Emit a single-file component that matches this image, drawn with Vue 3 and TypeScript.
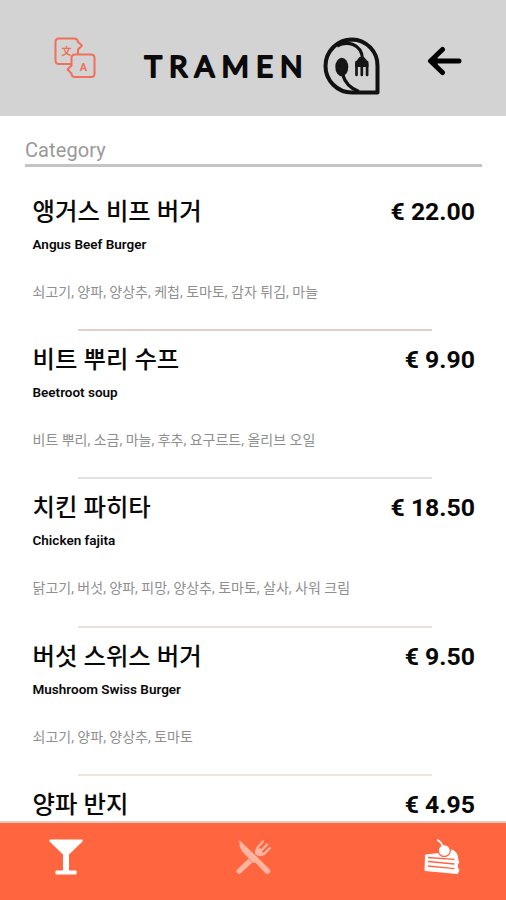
<script setup lang="ts">
interface Dish {
  name: string
  subtitle?: string
  ingredients?: string
  price: string
  tone?: string
}

const dishes: Dish[] = [
  { name: '앵거스 비프 버거', subtitle: 'Angus Beef Burger', ingredients: '쇠고기, 양파, 양상추, 케첩, 토마토, 감자 튀김, 마늘', price: '€ 22.00', tone: 'rose' },
  { name: '비트 뿌리 수프', subtitle: 'Beetroot soup', ingredients: '비트 뿌리, 소금, 마늘, 후추, 요구르트, 올리브 오일', price: '€ 9.90', tone: 'grey' },
  { name: '치킨 파히타', subtitle: 'Chicken fajita', ingredients: '닭고기, 버섯, 양파, 피망, 양상추, 토마토, 살사, 사워 크림', price: '€ 18.50', tone: 'sand' },
  { name: '버섯 스위스 버거', subtitle: 'Mushroom Swiss Burger', ingredients: '쇠고기, 양파, 양상추, 토마토', price: '€ 9.50', tone: 'blush' },
  { name: '양파 반지', price: '€ 4.95' },
]
</script>

<template>
  <div class="app">
    <header class="header">
      <svg class="translate" viewBox="0 0 42 42" fill="none" stroke="#f2705a" stroke-width="2" stroke-linejoin="round">
        <path d="M17 27H5Q1.500 27 1.500 23.500V5Q1.500 1.500 5 1.500H20Q23.500 1.500 24 5L28 8.500L24 12.500V17.500" />
        <path d="M21 17.500H37Q40.500 17.500 40.500 21V36.500Q40.500 40 37 40H21Q17.500 40 17.500 36.500L13.500 32.500L17.500 28.500V21Q17.500 17.500 21 17.500Z" />
        <text class="glyph-cjk" x="12.500" y="17.500" text-anchor="middle">文</text>
        <text class="glyph-a" x="29.500" y="33.500" text-anchor="middle">A</text>
      </svg>
      <div class="brand">
        <svg class="wordmark" viewBox="0 0 160 32">
          <text x="0.500" y="26.500" textLength="158">TRAMEN</text>
        </svg>
        <svg class="emblem" viewBox="0 0 58 58">
          <path d="M29 2.500A26.500 26.500 0 0 0 29 55.500H54.500V29A26 26 0 0 0 29 2.500Z" fill="none" stroke="#111" stroke-width="4" stroke-linejoin="round" />
          <path d="M14 9Q22 4.500 30 7.500Q39 11 39.500 22M19.500 37Q23 50 36 54.500" fill="none" stroke="#111" stroke-width="3.200" />
          <ellipse cx="18.800" cy="30" rx="6.500" ry="9.300" fill="#161616" />
          <path d="M33.500 25V38M38.800 22V38M44.100 25V38" fill="none" stroke="#161616" stroke-width="2.700" stroke-linecap="round" />
          <path d="M32.200 27Q33.500 23 36.500 20H41Q44.500 23 45.400 27V30H32.200Z" fill="#161616" />
        </svg>
      </div>
      <svg class="back" viewBox="0 0 36 30" fill="none" stroke="#000" stroke-width="5" stroke-linecap="round" stroke-linejoin="round">
        <path d="M32 15H5M15.500 3.500L3.500 15L15.500 26.500" />
        <path d="M3 15L10 9V21Z" fill="#000" stroke-width="1" />
      </svg>
    </header>

    <main class="content">
      <div class="category">Category</div>
      <section class="list">
        <article v-for="dish in dishes" :key="dish.name" class="dish">
          <div class="heading">
            <h2 class="name">{{ dish.name }}</h2>
            <span class="price">{{ dish.price }}</span>
          </div>
          <p v-if="dish.subtitle" class="subtitle">{{ dish.subtitle }}</p>
          <p v-if="dish.ingredients" class="ingredients">{{ dish.ingredients }}</p>
          <div v-if="dish.tone" class="divider" :class="dish.tone"></div>
        </article>
      </section>
    </main>

    <nav class="tabs">
      <svg class="drink" viewBox="0 0 34 36" fill="#fff">
        <path d="M1 .5H33Q34.500 1.500 33 3L20 15.500V31.500H27Q28.500 33.500 27 35.500H7Q5.500 33.500 7 31.500H14V15.500L1 3Q-.5 1.500 1 .5Z" />
      </svg>
      <svg class="food" viewBox="0 0 36 36">
        <g fill="none" stroke="#ffb5a0" stroke-linecap="round">
          <path d="M3.200 32.200L14 22" stroke-width="5.200" />
          <path d="M21 14L24 11" stroke-width="3.500" />
          <path d="M21.500 8.500L27 2.500M25 12L31 5.500M28 15L34 9" stroke-width="2.200" />
        </g>
        <path d="M21 8Q17 13 20.500 16Q24 18.500 29 15.500Z" fill="#ffb5a0" />
        <path d="M3 .5L22 18.500L34 30.500Q35.500 33 33.500 34.500Q31.500 36 29.500 34.500L19.500 24Q16.500 24.500 15 22L6 12.500Q2 7 3 .5Z" fill="#ffb5a0" stroke="#ff6640" stroke-width=".6" />
      </svg>
      <svg class="dessert" viewBox="0 0 36 36">
        <path d="M1.500 16L15 14.500L27 11Q33.500 11.500 34 21.500L35 23L33.500 25V29L35 31L33.500 34.500L1 31.500Z" fill="#fff" stroke="#fff" stroke-linejoin="round" />
        <path d="M4 18.500L30.500 20.300M4 22.500L30.500 25M4 27L30.500 29.700" fill="none" stroke="#ff6640" stroke-width="1.300" />
        <circle cx="20.300" cy="11.500" r="6" fill="#fff" stroke="#ff6640" stroke-width="1.300" />
        <path d="M18.500 7Q17.500 3 13.500 1" fill="none" stroke="#fff" stroke-width="1.600" stroke-linecap="round" />
      </svg>
    </nav>
  </div>
</template>

<style>
body {
  margin: 0;
}
</style>

<style scoped>
.app {
  display: flex;
  flex-direction: column;
  width: 506px;
  height: 900px;
  overflow: hidden;
  background: #fff;
  font-family: Roboto, "Noto Sans CJK KR", sans-serif;
}

.header {
  display: flex;
  flex: none;
  align-items: flex-start;
  box-sizing: border-box;
  height: 116px;
  padding: 37px 43px 0 54px;
  background: #d3d3d3;
}

.translate {
  flex: none;
  width: 42px;
  height: 42px;
}

.translate text {
  fill: #f2705a;
  stroke: none;
}

.glyph-cjk {
  font: 700 10px "Noto Sans CJK SC", sans-serif;
}

.glyph-a {
  font: 700 11px Roboto, sans-serif;
}

.brand {
  display: flex;
  margin-left: 48px;
}

.wordmark {
  width: 160px;
  height: 32px;
  margin-top: 13px;
  overflow: visible;
}

.wordmark text {
  fill: #0b0b0b;
  stroke: #0b0b0b;
  stroke-width: 2;
  stroke-linejoin: round;
  font: 400 29.5px Lato, sans-serif;
}

.emblem {
  width: 58px;
  height: 58px;
  margin-left: 19px;
}

.back {
  width: 36px;
  height: 30px;
  margin-top: 9px;
  margin-left: auto;
}

.content {
  flex: 1;
  min-height: 0;
  overflow: hidden;
}

.category {
  box-sizing: border-box;
  height: 51px;
  margin: 0 24px 0 25px;
  padding-top: 21px;
  border-bottom: 3px solid #c4c4c4;
  color: #999;
  font-size: 20px;
  line-height: 26px;
  letter-spacing: 0.1px;
}

.list {
  padding-top: 15.6px;
}

.dish {
  display: flex;
  flex-direction: column;
  box-sizing: border-box;
  height: 148.4px;
  padding: 10px 31px 0 32.5px;
}

.heading {
  display: flex;
  align-items: center;
  justify-content: space-between;
  height: 38px;
}

.name {
  margin: 0;
  color: #090909;
  font-size: 24.4px;
  font-weight: 500;
  line-height: 38px;
}

.price {
  color: #080808;
  font-size: 24.8px;
  font-weight: 700;
  line-height: 38px;
}

.subtitle {
  margin: 4px 0 0;
  color: #080808;
  font-size: 13.5px;
  font-weight: 600;
  line-height: 18px;
}

.ingredients {
  margin: 29px 0 0;
  color: #8f8f8f;
  font-size: 14px;
  line-height: 20px;
}

.divider {
  flex: none;
  height: 2px;
  margin: auto 43px 0 45.5px;
}

.rose {
  background: #e7cfc9;
}

.grey {
  background: #e1e1df;
}

.sand {
  background: #eddfd7;
}

.blush {
  background: #eee3e1;
}

.tabs {
  display: flex;
  flex: none;
  align-items: flex-start;
  justify-content: space-between;
  box-sizing: border-box;
  height: 79px;
  padding: 16px 46px 0 49px;
  border-top: 2px solid #dfc9c3;
  background: #ff6640;
}

.drink {
  width: 34px;
  height: 36px;
}

.food,
.dessert {
  width: 36px;
  height: 36px;
}
</style>
